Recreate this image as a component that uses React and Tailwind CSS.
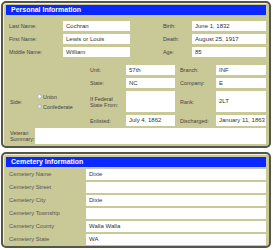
import React from "react";

const FONT = { fontFamily: '"Liberation Sans", Arial, sans-serif' };

function Field({ children, className = "" }) {
  return (
    <div
      className={`bg-white text-[6px] leading-[10px] text-[#333] pl-[3px] whitespace-nowrap overflow-hidden ${className}`}
    >
      {children}
    </div>
  );
}

function Label({ children, className = "" }) {
  return (
    <div className={`text-[5.4px] leading-[6px] text-[#444] ${className}`}>
      {children}
    </div>
  );
}

function Panel({ title, children, className = "" }) {
  return (
    <div
      className={`ml-[1px] mr-[2px] rounded-[5px] border-2 border-[#55554a] bg-[#c9c897] px-[3px] shadow-[inset_1px_1px_0_#f2f2dc] ${className}`}
    >
      <div className="h-[10px] bg-[#0a28ff] pl-[5px] text-[7px] font-bold leading-[10px] text-white">
        {title}
      </div>
      {children}
    </div>
  );
}

function Radio({ label, dim }) {
  return (
    <div className="flex items-center gap-[1px]">
      <span
        className={`inline-block h-[5px] w-[5px] rounded-full border border-[#b5b5a5] ${dim ? "bg-[#e4e4dc]" : "bg-white"}`}
      />
      <span className="text-[5.4px] leading-[6px] text-[#444]">{label}</span>
    </div>
  );
}

export default function App() {
  const top = [
    ["Last Name:", "Cochran", "Birth:", "June 1, 1832"],
    ["First Name:", "Lewis or Louis", "Death:", "August 25, 1917"],
    ["Middle Name:", "William", "Age:", "85"],
  ];

  const cemetery = [
    ["Cemetery Name", "Dixie"],
    ["Cemetery Street", ""],
    ["Cemetery City", "Dixie"],
    ["Cemetery Township", ""],
    ["Cemetery County", "Walla Walla"],
    ["Cemetery State", "WA"],
  ];

  return (
    <div className="w-[273px] h-[250px] bg-white pt-[1px]" style={FONT}>
      <Panel title="Personal Information" className="pt-[2px] pb-[2px]">
        {/* names and dates */}
        <div className="mt-[6px] flex flex-col gap-[3px]">
          {top.map(([l1, v1, l2, v2]) => (
            <div key={l1} className="flex h-[10px] items-center">
              <Label className="w-[57px] pl-[3px]">{l1}</Label>
              <Field className="w-[67px] h-[10px]">{v1}</Field>
              <Label className="w-[62px] pl-[33px]">{l2}</Label>
              <Field className="w-[74px] h-[10px]">{v2}</Field>
            </div>
          ))}
        </div>

        {/* service */}
        <div className="mt-[8px] grid grid-cols-[84px_36px_49px_41px_50px] grid-rows-[10px_10px_21px_11px] gap-y-[3px]">
          <div />
          <Label className="self-center">Unit:</Label>
          <Field>57th</Field>
          <Label className="self-center pl-[5px]">Branch:</Label>
          <Field>INF</Field>

          <div />
          <Label className="self-center">State:</Label>
          <Field>NC</Field>
          <Label className="self-center pl-[5px]">Company:</Label>
          <Field>E</Field>

          <div className="flex items-center">
            <Label className="w-[31px] pl-[4px]">Side:</Label>
            <div className="flex flex-col gap-[4px]">
              <Radio label="Union" />
              <Radio label="Confederate" dim />
            </div>
          </div>
          <Label className="self-center">
            If Federal
            <br />
            State From:
          </Label>
          <Field />
          <Label className="self-center pl-[5px]">Rank:</Label>
          <Field className="leading-[21px]">2LT</Field>

          <div />
          <Label className="self-center">Enlisted:</Label>
          <Field className="leading-[11px]">July 4, 1862</Field>
          <Label className="self-center pl-[5px]">Discharged:</Label>
          <Field className="leading-[11px]">January 11, 1863</Field>
        </div>

        <div className="mt-[2px] flex h-[16px] items-center">
          <Label className="w-[29px] pl-[4px]">
            Veteran
            <br />
            Summary:
          </Label>
          <Field className="h-[16px] w-[231px]" />
        </div>
      </Panel>

      <Panel title="Cemetery Information" className="mt-[4px] pt-[3px] pb-[1px]">
        <div className="mt-[2px] flex flex-col gap-[2px]">
          {cemetery.map(([l, v]) => (
            <div key={l} className="flex h-[11px] items-center">
              <div className="w-[80px] pl-[3px] text-[5.8px] leading-[11px] text-[#555]">
                {l}
              </div>
              <div className="h-[11px] flex-1 bg-white pl-[3px] text-[6px] leading-[11px] text-[#333]">
                {v}
              </div>
            </div>
          ))}
        </div>
      </Panel>
    </div>
  );
}
